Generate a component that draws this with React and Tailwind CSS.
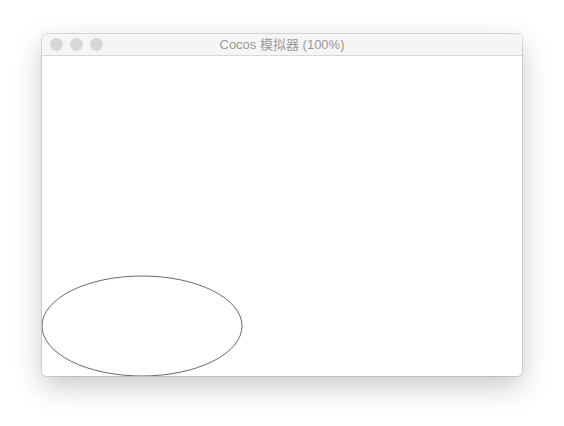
import React from 'react';

export default function App() {
  return (
    <div className="w-[564px] h-[426px] bg-white flex justify-center pt-[34px]" style={{ fontFamily: '"Liberation Sans", "Noto Sans CJK SC", sans-serif' }}>
      <div className="w-[480px] h-[342px] flex flex-col rounded-[5px] overflow-hidden shadow-[0_10px_28px_rgba(0,0,0,0.22),0_0_0_1px_rgba(0,0,0,0.12)]">
        {/* title bar */}
        <div className="relative h-[22px] flex items-center bg-[#f5f5f5] border-b border-[#d8d8d8]">
          <div className="flex gap-[7px] pl-[8px]">
            <span className="w-[13px] h-[13px] rounded-full bg-[#d8d8d8]" />
            <span className="w-[13px] h-[13px] rounded-full bg-[#d8d8d8]" />
            <span className="w-[13px] h-[13px] rounded-full bg-[#d8d8d8]" />
          </div>
          <div className="absolute inset-0 flex items-center justify-center text-[13px] text-[#9a9a9a]">
            Cocos 模拟器 (100%)
          </div>
        </div>
        {/* canvas */}
        <div className="flex-1 bg-white">
          <svg width="480" height="320" viewBox="0 0 480 320">
            <ellipse cx="100" cy="270" rx="100" ry="50" fill="none" stroke="#444" strokeWidth="0.8" />
          </svg>
        </div>
      </div>
    </div>
  );
}
